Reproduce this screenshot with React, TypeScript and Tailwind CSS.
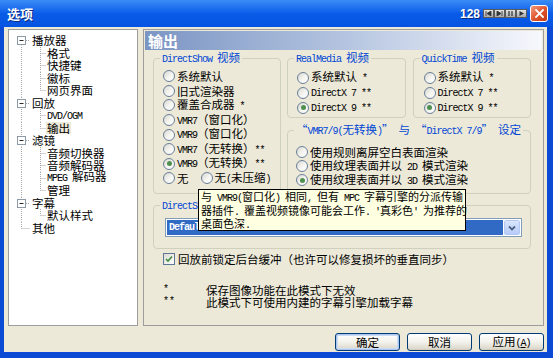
import React from 'react';

function T({ s }: { s: string }) {
  const parts = s.split(/([\x20-\x7e]+)/).filter((p) => p !== '');
  return (
    <>
      {parts.map((p, i) =>
        /^[\x20-\x7e]+$/.test(p) ? (
          <span key={i} className="font-['Liberation_Mono'] text-[10px] tracking-[-1px] whitespace-pre">
            {p}
          </span>
        ) : (
          <span key={i}>{p}</span>
        )
      )}
    </>
  );
}

function Radio({ checked = false }: { checked?: boolean }) {
  return (
    <span className="w-[12px] h-[12px] rounded-full border border-[#6a7f99] bg-gradient-to-br from-[#d8d7cf] via-[#f3f3ef] to-white flex items-center justify-center shrink-0">
      {checked && <span className="w-[5px] h-[5px] rounded-full bg-[#4f8f4f]" />}
    </span>
  );
}

function RadioRow({ label, checked, className }: { label: string; checked?: boolean; className: string }) {
  return (
    <div className={`flex items-center gap-[2px] whitespace-nowrap leading-[12px] ${className}`}>
      <Radio checked={checked} />
      <span>
        <T s={label} />
      </span>
    </div>
  );
}

function Group({ title, className, children }: { title: string; className: string; children?: React.ReactNode }) {
  return (
    <fieldset className={`border border-[#d0d0bf] rounded-[4px] min-w-0 ${className}`}>
      <legend className="ml-[6px] px-[2px] text-[#0046d5]">
        <div className="h-[12px] flex items-center whitespace-nowrap leading-[12px]">
          <span>
            <T s={title} />
          </span>
        </div>
      </legend>
      {children}
    </fieldset>
  );
}

type Row = { label: string; kind: 'root' | 'child' | 'leafRoot'; first?: boolean; last?: boolean; selected?: boolean };

const tree: Row[] = [
  { label: '播放器', kind: 'root', first: true },
  { label: '格式', kind: 'child' },
  { label: '快捷键', kind: 'child' },
  { label: '徽标', kind: 'child' },
  { label: '网页界面', kind: 'child', last: true },
  { label: '回放', kind: 'root' },
  { label: 'DVD/OGM', kind: 'child' },
  { label: '输出', kind: 'child', last: true, selected: true },
  { label: '滤镜', kind: 'root' },
  { label: '音频切换器', kind: 'child' },
  { label: '音频解码器', kind: 'child' },
  { label: 'MPEG 解码器', kind: 'child' },
  { label: '管理', kind: 'child', last: true },
  { label: '字幕', kind: 'root' },
  { label: '默认样式', kind: 'child', last: true },
  { label: '其他', kind: 'leafRoot' },
];

function TreeLines({ row }: { row: Row }) {
  const H = 12.5;
  const cy = 6.5;
  const stroke = '#a8a8a8';
  const dash = '1 1';
  if (row.kind === 'root') {
    return (
      <svg width="22" height={H} className="shrink-0">
        <line x1="12.5" y1={row.first ? cy : 0} x2="12.5" y2={H} stroke={stroke} strokeDasharray={dash} />
        <line x1="17" y1={cy} x2="21" y2={cy} stroke={stroke} strokeDasharray={dash} />
        <rect x="8.5" y={cy - 4} width="8" height="8" fill="white" stroke="#8c9aa8" />
        <line x1="10.5" y1={cy} x2="14.5" y2={cy} stroke="#2a2a2a" />
      </svg>
    );
  }
  if (row.kind === 'leafRoot') {
    return (
      <svg width="22" height={H} className="shrink-0">
        <line x1="12.5" y1="0" x2="12.5" y2={cy} stroke={stroke} strokeDasharray={dash} />
        <line x1="12.5" y1={cy} x2="21" y2={cy} stroke={stroke} strokeDasharray={dash} />
      </svg>
    );
  }
  return (
    <svg width="37" height={H} className="shrink-0">
      <line x1="12.5" y1="0" x2="12.5" y2={H} stroke={stroke} strokeDasharray={dash} />
      <line x1="31.5" y1="0" x2="31.5" y2={row.last ? cy : H} stroke={stroke} strokeDasharray={dash} />
      <line x1="31.5" y1={cy} x2="37" y2={cy} stroke={stroke} strokeDasharray={dash} />
    </svg>
  );
}

function MediaButtons() {
  const cls = 'w-[11px] h-[9px] bg-gradient-to-b from-[#e6e6e6] to-[#a9a9a9] border border-[#5a5a5a] flex items-center justify-center';
  return (
    <div className="flex items-center mr-[3px]">
      <span className={cls}>
        <svg width="7" height="5" viewBox="0 0 7 5"><path d="M1 0v5M6 0L2 2.5L6 5z" stroke="#333" fill="#333" strokeWidth="0.8" /></svg>
      </span>
      <span className={cls}>
        <svg width="7" height="5" viewBox="0 0 7 5"><path d="M1 0L5 2.5L1 5zM6 0v5" stroke="#333" fill="#333" strokeWidth="0.8" /></svg>
      </span>
      <span className={cls}>
        <svg width="7" height="5" viewBox="0 0 7 5"><path d="M2 0v5M5 0v5" stroke="#333" strokeWidth="1.2" /></svg>
      </span>
      <span className={cls}>
        <svg width="7" height="5" viewBox="0 0 7 5"><path d="M1.5 0L6 2.5L1.5 5z" fill="#333" /></svg>
      </span>
    </div>
  );
}

function Close() {
  return (
    <div className="w-[18px] h-[17px] rounded-[3px] border border-white bg-gradient-to-br from-[#f09a7c] via-[#e0572f] to-[#c2360e] flex items-center justify-center">
      <svg width="9" height="9" viewBox="0 0 9 9">
        <path d="M1 1L8 8M8 1L1 8" stroke="white" strokeWidth="1.8" strokeLinecap="square" />
      </svg>
    </div>
  );
}

function XPButton({ children, isDefault }: { children: React.ReactNode; isDefault?: boolean }) {
  return (
    <div
      className={`w-[65px] h-[18px] rounded-[3px] border border-[#003c74] bg-gradient-to-b from-white via-[#f3f2ec] to-[#d8d4c6] flex items-center justify-center leading-[12px] whitespace-nowrap ${
        isDefault ? 'shadow-[inset_0_0_0_1px_#a9c4ef,inset_0_0_0_2px_#cddcf5]' : 'shadow-[inset_0_-1px_0_#d6cfbf]'
      }`}
    >
      {children}
    </div>
  );
}

export default function App() {
  return (
    <div className="w-[553px] h-[358px] bg-[#0a4ad4] flex flex-col overflow-hidden font-['Noto_Sans_CJK_SC',sans-serif] text-[11.5px] text-black">
      {/* title bar */}
      <div className="h-[27px] shrink-0 flex items-center pl-[7px] pr-[5px] bg-gradient-to-b from-[#3a8cf6] via-[#0a5ce8] to-[#0553e2]">
        <span className="text-white font-bold text-[13px] leading-none [text-shadow:1px_1px_0_#0a2a80]">选项</span>
        <div className="ml-auto flex items-center">
          <span className="font-['Liberation_Sans'] font-bold text-white text-[12px] leading-none mr-[3px] [text-shadow:1px_1px_0_#0a2a80]">128</span>
          <MediaButtons />
          <Close />
        </div>
      </div>

      {/* client */}
      <div className="h-[325px] ml-[4px] mr-[6px] bg-[#ece9d8] flex flex-col pt-[2px] pl-[4px] pr-[3px]">
        <div className="flex gap-[5px] h-[297px]">
          {/* tree */}
          <div className="w-[130px] shrink-0 bg-white border border-[#9d9d9d] pt-[4px]">
            {tree.map((r, i) => (
              <div key={i} className="flex items-center h-[12.5px]">
                <TreeLines row={r} />
                <span className={`leading-[12px] whitespace-nowrap px-[1px] ${r.selected ? 'bg-[#ece9d8]' : ''}`}>
                  <T s={r.label} />
                </span>
              </div>
            ))}
          </div>

          {/* right panel */}
          <div className="relative w-[401px] shrink-0 border border-[#9d9d9d] flex flex-col">
            <div className="mx-[1px] mt-[1px] h-[19px] bg-gradient-to-r from-[#7b95c3] via-[#b4c4e0] to-[#f7f8fc] pl-[3px] flex items-center">
              <span className="text-white font-bold text-[15px] leading-none">输出</span>
            </div>

            <div className="pl-[9px] pr-[12px] pt-[2px] flex flex-col">
              <div className="flex gap-[6px]">
                <Group title="DirectShow 视频" className="w-[128px] h-[142px]">
                  <div className="pt-[5px] pl-[9px] flex flex-col">
                    <RadioRow className="h-[14.6px]" label="系统默认" />
                    <RadioRow className="h-[14.6px]" label="旧式渲染器" />
                    <RadioRow className="h-[14.6px]" label="覆盖合成器 *" />
                    <RadioRow className="h-[14.6px]" label="VMR7（窗口化）" />
                    <RadioRow className="h-[14.6px]" label="VMR9（窗口化）" />
                    <RadioRow className="h-[14.6px]" label="VMR7（无转换）**" />
                    <RadioRow className="h-[14.6px]" label="VMR9（无转换）**" checked />
                    <div className="flex items-center h-[14.6px] gap-[12px]">
                      <RadioRow className="h-[14.6px]" label="无" />
                      <RadioRow className="h-[14.6px]" label="无(未压缩)" />
                    </div>
                  </div>
                </Group>

                <div className="flex-1 flex flex-col gap-[6px]">
                  <div className="flex gap-[7px]">
                    <Group title="RealMedia 视频" className="flex-1 h-[66px]">
                      <div className="pt-[6px] pl-[9px] flex flex-col">
                        <RadioRow className="h-[15px]" label="系统默认 *" />
                        <RadioRow className="h-[15px]" label="DirectX 7 **" />
                        <RadioRow className="h-[15px]" label="DirectX 9 **" checked />
                      </div>
                    </Group>
                    <Group title="QuickTime 视频" className="flex-1 h-[66px]">
                      <div className="pt-[6px] pl-[10px] flex flex-col">
                        <RadioRow className="h-[15px]" label="系统默认 *" />
                        <RadioRow className="h-[15px]" label="DirectX 7 **" />
                        <RadioRow className="h-[15px]" label="DirectX 9 **" checked />
                      </div>
                    </Group>
                  </div>
                  <Group title="“VMR7/9(无转换)” 与 “DirectX 7/9” 设定" className="h-[70px]">
                    <div className="pt-[9px] pl-[8px] flex flex-col">
                      <RadioRow className="h-[14px]" label="使用规则离屏空白表面渲染" />
                      <RadioRow className="h-[14px]" label="使用纹理表面并以 2D 模式渲染" />
                      <RadioRow className="h-[14px]" label="使用纹理表面并以 3D 模式渲染" checked />
                    </div>
                  </Group>
                </div>
              </div>

              <Group title="DirectShow 音频" className="mt-[5px] h-[50px]">
                <div className="pt-[7px] pl-[11px] pr-[8px]">
                  <div className="h-[19px] border border-[#7f9db9] bg-white flex p-[1px] gap-[1px]">
                    <div className="flex-1 bg-[#316ac5] text-white flex items-center pl-[2px] leading-[12px]">
                      <span className="font-['Liberation_Mono'] text-[10px] tracking-[-1px] font-bold">Default DirectSound Device</span>
                    </div>
                    <div className="w-[16px] rounded-[2px] bg-gradient-to-b from-[#dbe6fd] to-[#b6cbf7] border border-[#b4c8f5] flex items-center justify-center">
                      <svg width="8" height="6" viewBox="0 0 8 6">
                        <path d="M1 1.5L4 4.5L7 1.5" stroke="#4d6185" strokeWidth="1.8" fill="none" />
                      </svg>
                    </div>
                  </div>
                </div>
              </Group>

              <div className="mt-[3px] ml-[10px] flex items-center h-[13px] gap-[3px] whitespace-nowrap leading-[12px]">
                <span className="w-[12px] h-[12px] border border-[#5f7896] bg-gradient-to-br from-[#dcdbd3] to-white flex items-center justify-center shrink-0">
                  <svg width="8" height="8" viewBox="0 0 8 8">
                    <path d="M1 4L3 6L7 1.5" stroke="#3f8f3f" strokeWidth="1.6" fill="none" />
                  </svg>
                </span>
                <span>回放前锁定后台缓冲（也许可以修复损坏的垂直同步）</span>
              </div>

              <div className="mt-[19px] ml-[10px] flex flex-col leading-[12px]">
                <div className="flex h-[12px] items-center">
                  <span className="w-[43px] font-['Liberation_Mono'] text-[10px]">*</span>
                  <span>保存图像功能在此模式下无效</span>
                </div>
                <div className="flex h-[12px] items-center">
                  <span className="w-[43px] font-['Liberation_Mono'] text-[10px]">**</span>
                  <span>此模式下可使用内建的字幕引擎加载字幕</span>
                </div>
              </div>
            </div>

            {/* tooltip */}
            <div className="absolute left-[54px] top-[159px] w-[268px] h-[42px] bg-[#ffffe1] border border-black pl-[2px] pt-[1px] text-[11px] whitespace-nowrap">
              <div className="h-[13.5px] flex items-center leading-[12px]">
                <span>
                  <T s="与 VMR9(窗口化) 相同, 但有 MPC 字幕引擎的分派传输" />
                </span>
              </div>
              <div className="h-[13.5px] flex items-center leading-[12px]">
                <span>
                  <T s="器插件. 覆盖视频镜像可能会工作. '真彩色' 为推荐的" />
                </span>
              </div>
              <div className="h-[13.5px] flex items-center leading-[12px]">
                <span>
                  <T s="桌面色深." />
                </span>
              </div>
            </div>
          </div>
        </div>

        {/* buttons */}
        <div className="mt-[7px] flex justify-end gap-[7px]">
          <XPButton isDefault>确定</XPButton>
          <XPButton>取消</XPButton>
          <XPButton>
            <span>
              应用<span className="font-['Liberation_Mono'] text-[10px] tracking-[-1px]">(<span className="underline">A</span>)</span>
            </span>
          </XPButton>
        </div>
      </div>
    </div>
  );
}
